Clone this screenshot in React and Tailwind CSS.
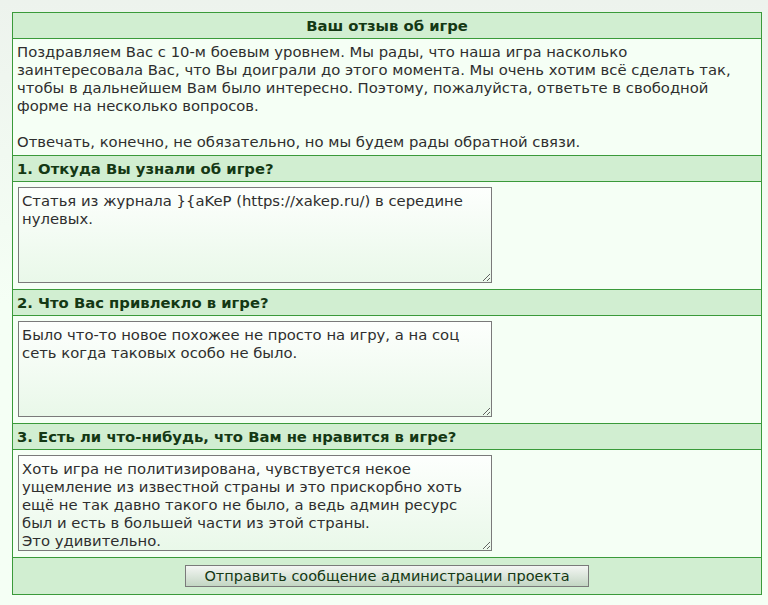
import { useState } from "react";

const questions = [
  {
    title: "1. Откуда Вы узнали об игре?",
    answer: "Статья из журнала }{aKeP (https://xakep.ru/) в середине нулевых.",
  },
  {
    title: "2. Что Вас привлекло в игре?",
    answer:
      "Было что-то новое похожее не просто на игру, а на соц сеть когда таковых особо не было.",
  },
  {
    title: "3. Есть ли что-нибудь, что Вам не нравится в игре?",
    answer:
      "Хоть игра не политизирована, чувствуется некое ущемление из известной страны и это прискорбно хоть ещё не так давно такого не было, а ведь админ ресурс был и есть в большей части из этой страны.\nЭто удивительно.",
  },
];

function HeadRow({ children, center }) {
  return (
    <div
      className={`h-[26px] px-1 flex items-center bg-[#d1eed1] border-b border-[#3a9a3a] font-bold text-[14.8px] text-[#143814] ${
        center ? "justify-center" : ""
      }`}
    >
      {children}
    </div>
  );
}

function AnswerRow({ value, onChange }) {
  return (
    <div className="h-[108px] px-[5px] pt-[5px] border-b border-[#3a9a3a] bg-[#f5fff5]">
      <textarea
        value={value}
        onChange={onChange}
        className="block w-[474px] h-[96px] px-[3px] py-[4px] border border-[#7a7a7a] bg-gradient-to-b from-[#fdfffd] to-[#e9f8e9] text-[14.8px] leading-[18px] text-[#2e2e2e] outline-none resize"
        style={{ fontFamily: '"DejaVu Sans", Verdana, sans-serif' }}
      />
    </div>
  );
}

export default function App() {
  const [answers, setAnswers] = useState(questions.map((q) => q.answer));

  return (
    <div
      className="min-h-[605px] p-3 bg-gradient-to-b from-[#edf3ed] via-[#f5fff5] to-[#f5fff5] text-[14.8px] leading-[18px] text-[#2e2e2e]"
      style={{ fontFamily: '"DejaVu Sans", Verdana, sans-serif' }}
    >
      <div className="w-[750px] border border-b-0 border-[#3a9a3a] bg-[#f5fff5]">
        <HeadRow center>Ваш отзыв об игре</HeadRow>
        <div className="h-[117px] px-1 py-1 border-b border-[#3a9a3a]">
          <p>
            Поздравляем Вас с 10-м боевым уровнем. Мы рады, что наша игра насколько
            заинтересовала Вас, что Вы доиграли до этого момента. Мы очень хотим всё
            сделать так, чтобы в дальнейшем Вам было интересно. Поэтому, пожалуйста,
            ответьте в свободной форме на несколько вопросов.
          </p>
          <p className="mt-[18px]">
            Отвечать, конечно, не обязательно, но мы будем рады обратной связи.
          </p>
        </div>
        {questions.map((q, i) => (
          <div key={i}>
            <HeadRow>{q.title}</HeadRow>
            <AnswerRow
              value={answers[i]}
              onChange={(e) =>
                setAnswers((a) => a.map((v, j) => (j === i ? e.target.value : v)))
              }
            />
          </div>
        ))}
        <div className="h-[37px] flex items-center justify-center bg-[#d1eed1] border-b border-[#3a9a3a]">
          <button className="w-[404px] h-[22px] border border-[#7a7a7a] bg-gradient-to-b from-[#f4f6f4] to-[#c3d6c3] text-[14.5px] text-[#143814] leading-none">
            Отправить сообщение администрации проекта
          </button>
        </div>
      </div>
    </div>
  );
}
